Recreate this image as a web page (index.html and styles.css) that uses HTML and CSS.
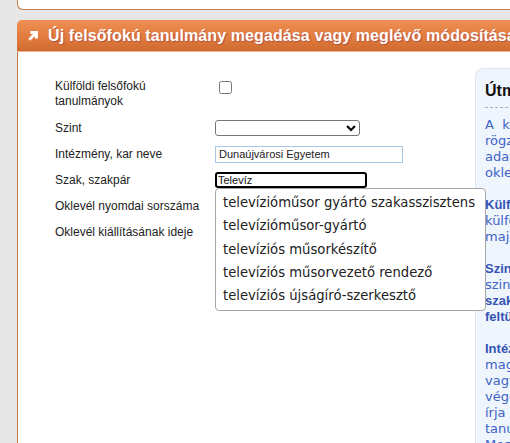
FILE: index.html
```html
<!DOCTYPE html>
<html lang="hu">
<head>
<meta charset="utf-8">
<title>Felsőfokú tanulmány</title>
<link rel="stylesheet" href="styles.css">
</head>
<body>
<div class="topbox"></div>
<section class="panel">
  <header class="panel-head">
    <svg class="head-icon" width="12" height="12" viewBox="0 0 12 12"><path d="M1.3 8.8 L6 4.1 L3.4 4.1 L3.4 1.1 L10.9 1.1 L10.9 8.6 L7.9 8.6 L7.9 6 L3.2 10.7 Z" fill="#fff"/></svg>
    <h2 class="head-title">Új felsőfokú tanulmány megadása vagy meglévő módosítása</h2>
  </header>
  <div class="panel-body">
    <form class="form">
      <label class="lbl two">Külföldi felsőfokú<br>tanulmányok</label>
      <div class="ctl top"><input type="checkbox" class="chk"></div>
      <label class="lbl">Szint</label>
      <div class="ctl"><select class="sel"><option></option></select></div>
      <label class="lbl">Intézmény, kar neve</label>
      <div class="ctl"><input class="txt inst" type="text" value="Dunaújvárosi Egyetem"></div>
      <label class="lbl">Szak, szakpár</label>
      <div class="ctl ac">
        <input class="txt szak" type="text" value="Televíz">
        <ul class="suggest">
          <li>televízióműsor gyártó szakasszisztens</li>
          <li>televízióműsor-gyártó</li>
          <li>televíziós műsorkészítő</li>
          <li>televíziós műsorvezető rendező</li>
          <li>televíziós újságíró-szerkesztő</li>
        </ul>
      </div>
      <label class="lbl">Oklevél nyomdai sorszáma</label>
      <div class="ctl"></div>
      <label class="lbl">Oklevél kiállításának ideje</label>
      <div class="ctl"></div>
    </form>
    <aside class="guide">
      <h3 class="guide-title">Útmutató</h3>
      <p class="g">A &nbsp;kérdőív ebben a részében<br>rögzítheti a felsőfokú tanulmányainak<br>adatait. Minden megszerzett<br>oklevelet külön kell rögzíteni.</p>
      <p class="g"><b>Külföldi felsőfokú tanulmányok:</b><br>külföldön szerzett oklevél esetén<br>majd jelölje be a négyzetet.</p>
      <p class="g"><b>Szint:</b> válassza ki a megfelelő<br>szintet a listából. A<br><strong>szakirányú továbbképzést</strong><br><strong>feltüntetni nem kell.</strong></p>
      <p class="g"><b>Intézmény, kar neve:</b> kezdje el<br>magyarul beírni az intézmény<br>vagy a kar nevét, majd a lista<br>végén válasszon. Ha nem találja,<br>írja be teljes nevén a<br>tanulmányok helyét.<br>Most ...</p>
    </aside>
  </div>
</section>
</body>
</html>
```
FILE: styles.css
```css
html, body {
  margin: 0;
  padding: 0;
}
body {
  background: #e6e6e6;
  font-family: "Liberation Sans", Arial, sans-serif;
  width: 510px;
  height: 443px;
  overflow: hidden;
}
.topbox {
  margin-left: 17px;
  height: 9px;
  background: #fff;
  border: 1px solid #c9794a;
  border-top: none;
  border-right: none;
  border-bottom-left-radius: 6px;
}
.panel {
  margin: 10px 0 0 17px;
  width: 760px;
}
.panel-head {
  height: 31px;
  display: flex;
  align-items: center;
  gap: 9px;
  padding-left: 10px;
  background: linear-gradient(#ef8f53, #e07a3d 60%, #cf6a2f);
  border-top-left-radius: 5px;
  border-bottom: 1px solid #f1b48c;
}
.head-icon {
  flex: none;
  margin-top: 1px;
}
.head-title {
  margin: 0;
  font-size: 16px;
  font-weight: bold;
  color: #fff;
  white-space: nowrap;
  letter-spacing: 0.1px;
  text-shadow: 1px 1px 1px rgba(120, 40, 80, 0.45);
}
.panel-body {
  display: flex;
  align-items: flex-start;
  background: #fff;
  border-left: 1px solid #c9794a;
  height: 400px;
}
.form {
  display: grid;
  grid-template-columns: 160px 1fr;
  grid-template-rows: 31px;
  grid-auto-rows: 16px;
  row-gap: 10px;
  padding: 27px 0 0 37px;
  width: 420px;
  flex: none;
  margin: 0;
  font-size: 12px;
  color: #222;
}
.lbl {
  line-height: 15px;
  display: flex;
  align-items: center;
  white-space: nowrap;
}
.lbl.two {
  display: block;
  height: 30px;
}
.ctl {
  position: relative;
  display: flex;
  align-items: center;
}
.ctl.top {
  align-items: flex-start;
}
.chk {
  margin: 2px 0 0 4px;
  width: 13px;
  height: 13px;
}
.sel {
  width: 145px;
  height: 16px;
  margin: 0;
  font-size: 11px;
  padding: 0;
  border: 1px solid #767676;
  border-radius: 3px;
  background: #fff;
}
.txt {
  margin: 0;
  height: 16px;
  box-sizing: border-box;
  font-family: "Liberation Sans", Arial, sans-serif;
  font-size: 11px;
  color: #222;
  outline: none;
}
.inst {
  width: 188px;
  height: 17px;
  border: 1px solid #a9c6e6;
  padding: 0 3px;
}
.szak {
  width: 152px;
  border: 2px solid #000;
  border-radius: 3px;
  padding: 0 1px;
  color: #111;
}
.suggest {
  position: absolute;
  left: 0;
  top: 16px;
  z-index: 5;
  margin: 0;
  padding: 2px 0 3px;
  list-style: none;
  width: 269px;
  background: #fff;
  border: 1px solid #a6a6a6;
  border-radius: 4px;
  font-family: "DejaVu Sans", Verdana, sans-serif;
  font-size: 13.2px;
  color: #222;
}
.suggest li {
  padding: 0 8px 0 7px;
  line-height: 23.3px;
  white-space: nowrap;
}
.guide {
  flex: none;
  margin: 16px 0 0 0;
  width: 260px;
  background: #eff5fc;
  border: 1px solid #dbe6f2;
  border-radius: 8px 0 0 0;
  padding: 12px 0 0 9px;
  height: 380px;
  box-sizing: border-box;
  font-family: "DejaVu Sans", Verdana, sans-serif;
  font-size: 13px;
  line-height: 16px;
  color: #4062c6;
}
.guide-title {
  margin: 0;
  font-family: "Liberation Sans", Arial, sans-serif;
  font-size: 16px;
  line-height: 19px;
  font-weight: bold;
  color: #111;
  padding-bottom: 7px;
  border-bottom: 1px dashed #a7afb8;
  width: 230px;
}
.g {
  margin: 9px 0 16px;
  white-space: nowrap;
}
.g b, .g strong {
  font-family: "Liberation Sans", Arial, sans-serif;
  font-size: 13px;
  color: #3354b5;
}
```
